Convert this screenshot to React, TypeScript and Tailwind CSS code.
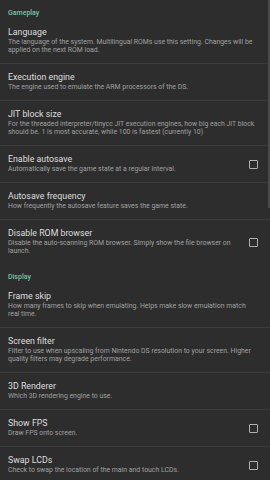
const gameplay = [
  {
    title: "Language",
    summary:
      "The language of the system. Multilingual ROMs use this setting. Changes will be applied on the next ROM load.",
  },
  { title: "Execution engine", summary: "The engine used to emulate the ARM processors of the DS." },
  {
    title: "JIT block size",
    summary:
      "For the threaded interpreter/tinycc JIT execution engines, how big each JIT block should be. 1 is most accurate, while 100 is fastest (currently 10)",
  },
  { title: "Enable autosave", summary: "Automatically save the game state at a regular interval.", check: true },
  { title: "Autosave frequency", summary: "How frequently the autosave feature saves the game state." },
  {
    title: "Disable ROM browser",
    summary: "Disable the auto-scanning ROM browser. Simply show the file browser on launch.",
    check: true,
  },
]

const display = [
  {
    title: "Frame skip",
    summary: "How many frames to skip when emulating. Helps make slow emulation match real time.",
  },
  {
    title: "Screen filter",
    summary:
      "Filter to use when upscaling from Nintendo DS resolution to your screen. Higher quality filters may degrade performance.",
  },
  { title: "3D Renderer", summary: "Which 3D rendering engine to use." },
  { title: "Show FPS", summary: "Draw FPS onto screen.", check: true },
  { title: "Swap LCDs", summary: "Check to swap the location of the main and touch LCDs.", check: true },
]

type Pref = { title: string; summary: string; check?: boolean }

function Section({ name, items }: { name: string; items: Pref[] }) {
  return (
    <div>
      <div className="h-[19px] pt-[9px] pl-2 text-[7px] leading-[8px] font-medium text-[#7cc2a6]">{name}</div>
      {items.map((item, i) => (
        <div key={item.title}>
          {i > 0 && <div className="h-px bg-[#3b3b3b]" />}
          <div className="flex items-center pl-2 pr-[12px]">
            <div className="flex-1 pt-[8px] pb-[9px]">
              <div className="text-[8.8px] leading-[11px] text-[#dedede]">{item.title}</div>
              <div className="text-[6.9px] leading-[8px] text-[#a0a0a0]">{item.summary}</div>
            </div>
            {item.check && (
              <div className="ml-1 w-[9px] h-[9px] shrink-0 rounded-[1px] border-[1.5px] border-[#b0b0b0]" />
            )}
          </div>
        </div>
      ))}
    </div>
  )
}

export default function App() {
  return (
    <div
      className="relative w-[270px] h-[480px] overflow-hidden bg-[#2d2d2d]"
      style={{ fontFamily: "Roboto, 'Noto Sans', sans-serif" }}
    >
      <Section name="Gameplay" items={gameplay} />
      <Section name="Display" items={display} />
      <div className="absolute right-0 top-0 w-[2px] h-[208px] bg-[#4a4a4a]" />
    </div>
  )
}
